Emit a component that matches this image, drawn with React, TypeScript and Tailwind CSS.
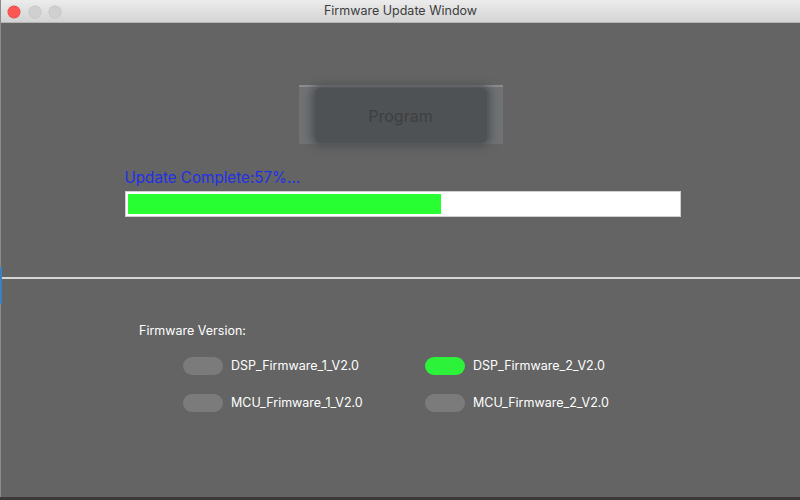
const firmwares = [
  [
    { name: "DSP_Firmware_1_V2.0", on: false },
    { name: "DSP_Firmware_2_V2.0", on: true },
  ],
  [
    { name: "MCU_Frimware_1_V2.0", on: false },
    { name: "MCU_Firmware_2_V2.0", on: false },
  ],
];

const progress = 57;

function Toggle({ name, on }: { name: string; on: boolean }) {
  return (
    <div className="flex w-[242px] items-center gap-[8px]">
      <div
        className={`h-[18px] w-[40px] rounded-full ${on ? "bg-[#2cf23a]" : "bg-[#7b7b7b]"}`}
      />
      <span className="text-[12.5px] leading-[18px] text-white">{name}</span>
    </div>
  );
}

export default function App() {
  return (
    <div
      className="flex h-[500px] w-[800px] flex-col overflow-hidden bg-[#3a3a3a]"
      style={{ fontFamily: "Inter, 'Noto Sans', sans-serif" }}
    >
      <div className="flex h-[497px] flex-col border-l border-[#8a8a8a] bg-[#646464]">
        {/* title bar */}
        <div className="relative flex h-[23px] shrink-0 items-center justify-center border-b border-[#b5b5b5] bg-gradient-to-b from-[#ececec] to-[#d4d4d4]">
          <div className="absolute left-[7px] top-[6px] flex gap-[8.5px]">
            <div className="h-[12px] w-[12px] rounded-full bg-[#fc5753] ring-[0.5px] ring-[#df4744]" />
            <div className="h-[12px] w-[12px] rounded-full bg-[#d0d0d0] ring-[0.5px] ring-[#bdbdbd]" />
            <div className="h-[12px] w-[12px] rounded-full bg-[#d0d0d0] ring-[0.5px] ring-[#bdbdbd]" />
          </div>
          <span className="text-[12.5px] text-[#3c3c3c]">Firmware Update Window</span>
        </div>

        {/* top section */}
        <div className="flex h-[254px] shrink-0 flex-col items-center">
          <button className="mt-[62px] flex h-[59px] w-[204px] items-center justify-center border-t-2 border-[#8a8c8e] bg-[#707274] p-0">
            <div className="flex h-[55px] w-[172px] items-center justify-center rounded-[6px] bg-[#4f5254] shadow-[0_0_8px_4px_#4f5254]">
              <span className="text-[16px] text-[#3d3f41]">Program</span>
            </div>
          </button>
          <div className="mt-[24px] w-[556px] translate-x-[2px]">
            <div className="text-[15.2px] leading-[20px] text-[#2130e6]">
              Update Complete:{progress}%...
            </div>
            <div className="mt-[3px] h-[26px] w-full border border-[#cfcfcf] bg-white p-[2px]">
              <div
                className="h-full bg-[#28ff32]"
                style={{ width: `${progress}%` }}
              />
            </div>
          </div>
        </div>

        {/* separator */}
        <div className="relative h-[2px] shrink-0 bg-[#d6d6d6]">
          <div className="absolute -left-[1px] -top-[10px] h-[37px] w-[2px] bg-[#3f7fc0]" />
        </div>

        {/* bottom section */}
        <div className="flex flex-col pl-[138px] pt-[43px]">
          <div className="text-[12.5px] leading-[18px] text-white">Firmware Version:</div>
          <div className="mt-[17px] flex flex-col gap-[19px] pl-[44px]">
            {firmwares.map((row, i) => (
              <div key={i} className="flex">
                {row.map((f) => (
                  <Toggle key={f.name} name={f.name} on={f.on} />
                ))}
              </div>
            ))}
          </div>
        </div>
      </div>
    </div>
  );
}
